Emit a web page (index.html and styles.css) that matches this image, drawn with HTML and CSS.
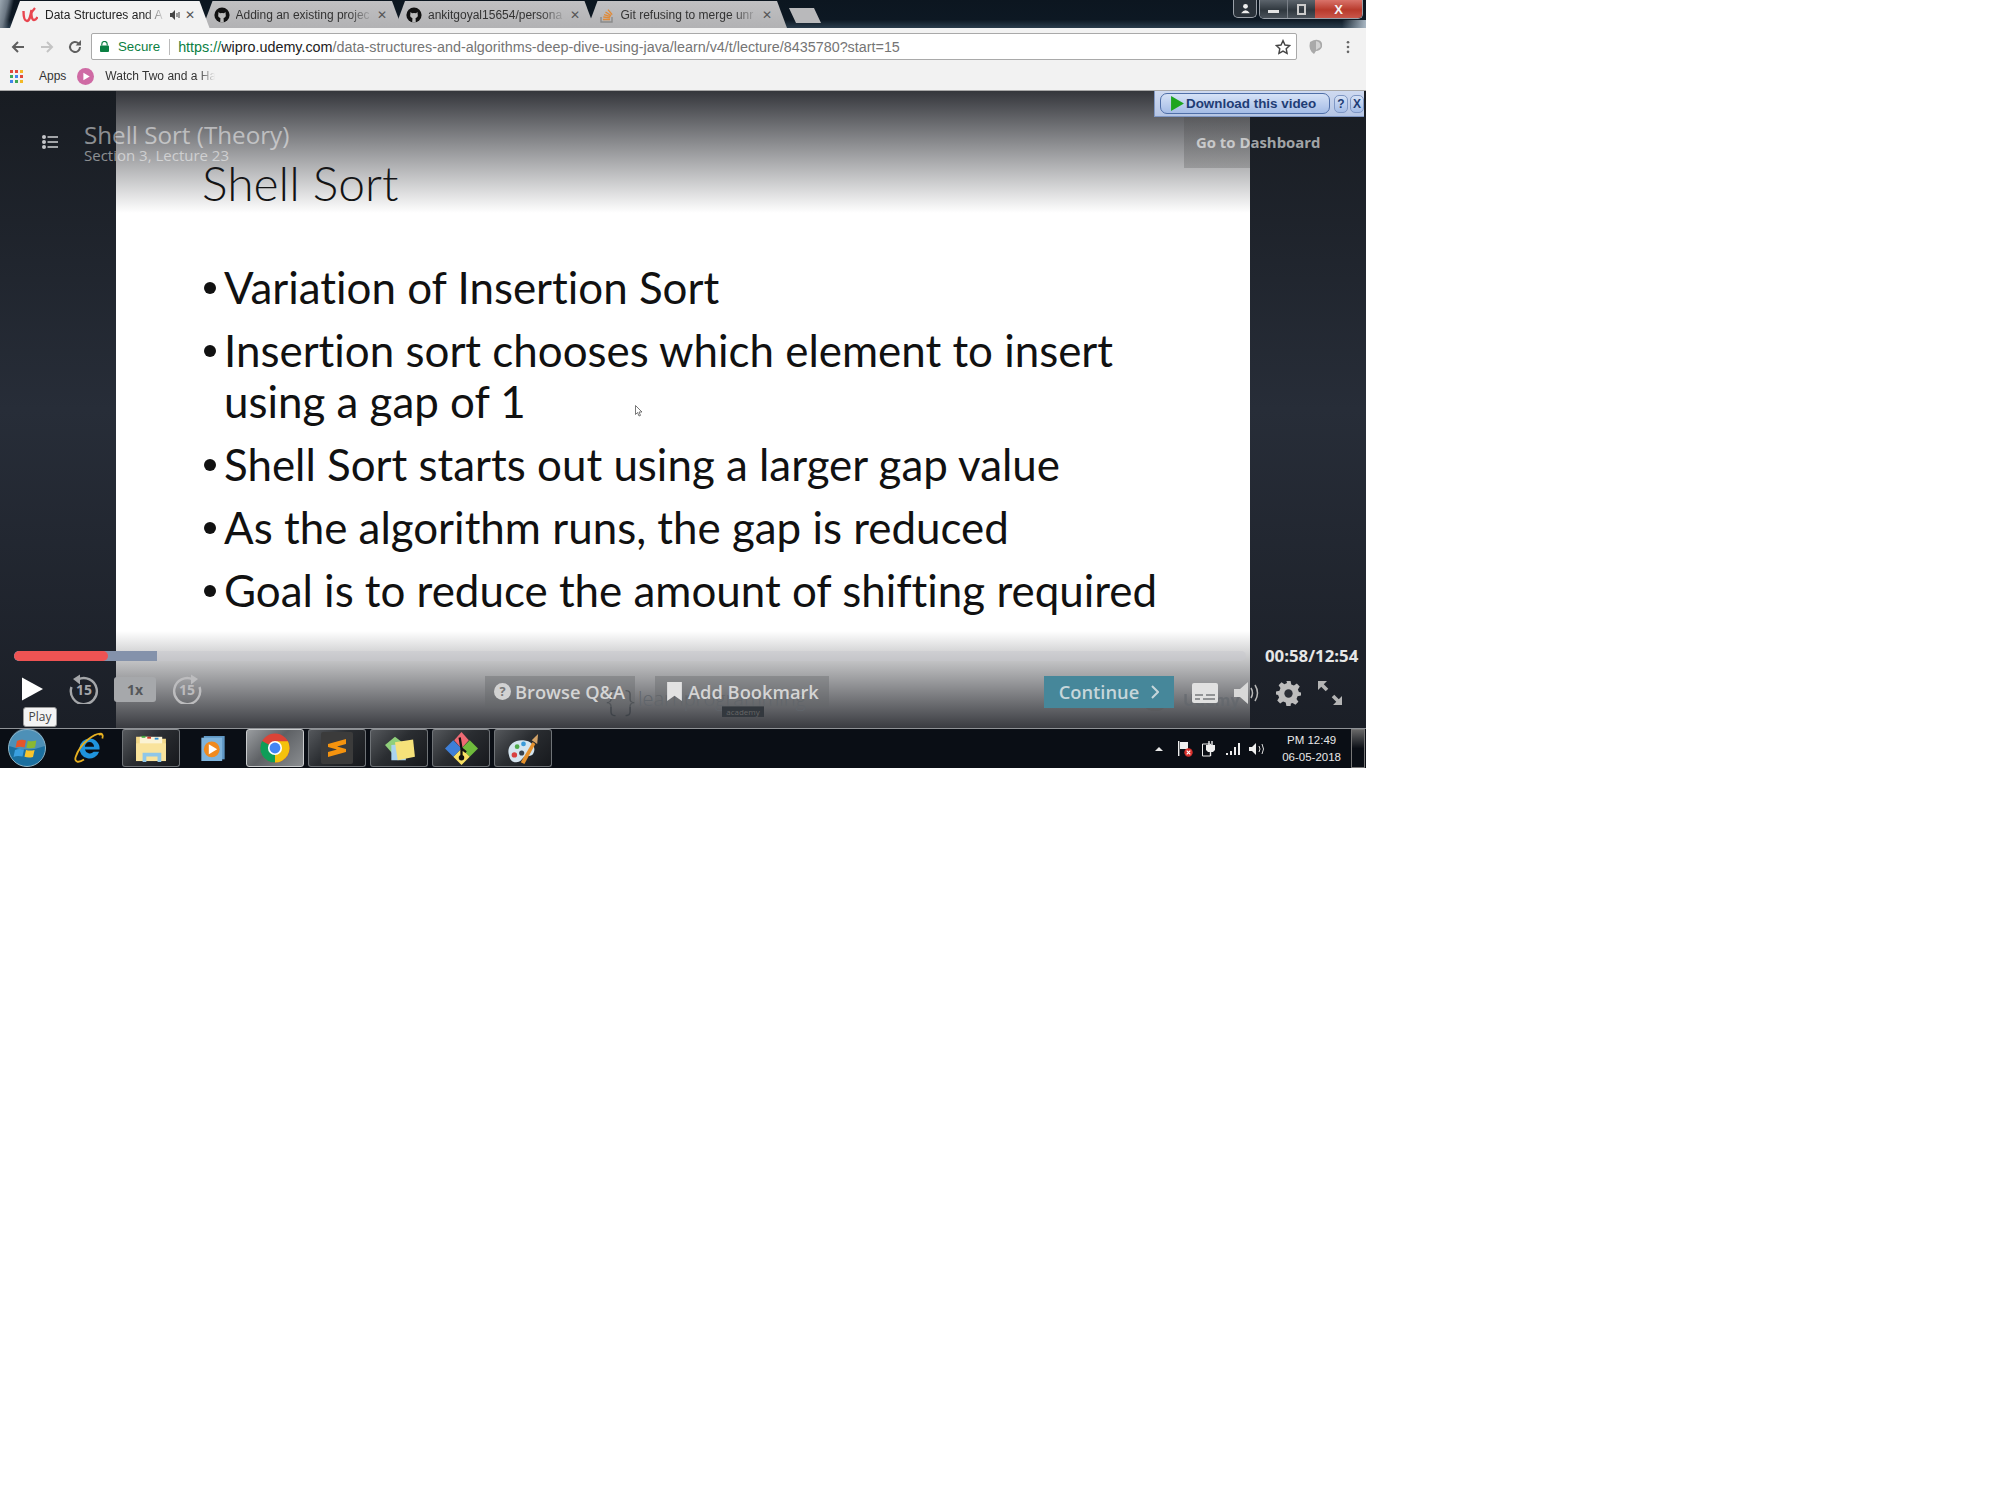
FILE: index.html
```html
<!DOCTYPE html>
<html lang="en">
<head>
  <meta charset="UTF-8">
  <title>Shell Sort (Theory)</title>
  <link rel="stylesheet" href="styles.css">
</head>
<body>
<div class="screen">

  <!-- tab strip -->
  <div class="tabstrip">
    <div class="tab tab-active">
      <svg class="favicon" viewBox="0 0 16 16"><path d="M1.500 4 C1.500 9 2.500 14 5 14 C7.500 14 8.500 9 9.500 3 C9 9 10 13 12 13 C13.500 13 14.500 12 15.500 10" fill="none" stroke="#e8454f" stroke-width="2.400"/><path d="M9 6 L13 1" stroke="#e8454f" stroke-width="2.200"/></svg>
      <span class="tab-title">Data Structures and A</span>
      <svg class="tab-sound" viewBox="0 0 10 10"><path d="M0 3h2l3-3v10l-3-3H0z" fill="#444"/><path d="M7 3v4M9 2v6" stroke="#444"/></svg>
      <span class="tab-x">✕</span>
    </div>
    <div class="tab">
      <svg class="favicon" viewBox="0 0 16 16"><circle cx="8" cy="8" r="7.600" fill="#111"/><path d="M4.500 5 L6 6.200 Q8 5.600 10 6.200 L11.500 5 L11.700 7.600 Q12.400 10.400 9.600 11 L9.800 15.600 H6.200 L6.400 11 Q3.600 10.400 4.300 7.600Z" fill="#bbb"/></svg>
      <span class="tab-title">Adding an existing projec</span>
      <span class="tab-x">✕</span>
    </div>
    <div class="tab">
      <svg class="favicon" viewBox="0 0 16 16"><circle cx="8" cy="8" r="7.600" fill="#111"/><path d="M4.500 5 L6 6.200 Q8 5.600 10 6.200 L11.500 5 L11.700 7.600 Q12.400 10.400 9.600 11 L9.800 15.600 H6.200 L6.400 11 Q3.600 10.400 4.300 7.600Z" fill="#bbb"/></svg>
      <span class="tab-title">ankitgoyal15654/persona</span>
      <span class="tab-x">✕</span>
    </div>
    <div class="tab">
      <svg class="favicon" viewBox="0 0 16 16"><path d="M2 10v5h11v-5" fill="none" stroke="#8a8a8a" stroke-width="1.400"/><path d="M4 12.500h7M4.300 10l6.800 .9M5 7.600l6.500 2M6.500 5l5.600 3.600M9 2.600l4.200 5" stroke="#e08a38" stroke-width="1.400"/></svg>
      <span class="tab-title">Git refusing to merge unr</span>
      <span class="tab-x">✕</span>
    </div>
    <div class="tab-new"></div>
    <div class="winctl">
      <span class="win-btn win-user"><svg viewBox="0 0 10 10" width="11" height="11"><circle cx="5" cy="3" r="2.200" fill="#eee"/><path d="M1 9.400 Q5 3.600 9 9.400z" fill="#eee"/></svg></span>
      <div class="win-group">
        <span class="win-btn win-min"><i></i></span>
        <span class="win-btn win-max"><i></i></span>
        <span class="win-btn win-close">X</span>
      </div>
    </div>
  </div>

  <!-- toolbar -->
  <div class="toolbar">
    <svg class="nav-icon" viewBox="0 0 16 16"><path d="M14 8H3M8 3 3 8l5 5" fill="none" stroke="#5f5f5f" stroke-width="2"/></svg>
    <svg class="nav-icon" viewBox="0 0 16 16"><path d="M2 8h11M8 3l5 5-5 5" fill="none" stroke="#c4c4c4" stroke-width="2"/></svg>
    <svg class="nav-icon nav-reload" viewBox="0 0 16 16"><path d="M13 8a5 5 0 1 1-1.500-3.600" fill="none" stroke="#5f5f5f" stroke-width="2"/><path d="M14 1v5.400H8.600z" fill="#5f5f5f"/></svg>
    <div class="omnibox">
      <svg class="lock" viewBox="0 0 10 12"><path d="M2 5V3.400a3 3 0 0 1 6 0V5" fill="none" stroke="#0b8043" stroke-width="1.300"/><rect y="5" width="10" height="7" rx="1" x="0" fill="#0b8043"/></svg>
      <span class="secure">Secure</span>
      <span class="omni-sep"></span>
      <span class="url"><span class="url-green">https://</span><span class="url-host">wipro.udemy.com</span>/data-structures-and-algorithms-deep-dive-using-java/learn/v4/t/lecture/8435780?start=15</span>
      <svg class="star" viewBox="0 0 16 16"><path d="M8 1.600l2 4.400 4.600.5-3.400 3.200.9 4.700L8 12.100l-4.100 2.300.9-4.700L1.400 6.500 6 6z" fill="none" stroke="#444" stroke-width="1.400"/></svg>
    </div>
    <svg class="ext-icon" viewBox="0 0 16 16"><path d="M3 3 Q8 0 11 1 Q16 2 15 8 Q13 12 9 12 L7 15 Q1 11 3 3z" fill="#a9a9a9"/><path d="M9 2 Q14 3 13.500 8 L9 11z" fill="#d2d2d2"/></svg>
    <svg class="menu-icon" viewBox="0 0 4 16"><circle cx="2" cy="2.500" r="1.500" fill="#666"/><circle cx="2" cy="8" r="1.500" fill="#666"/><circle cx="2" cy="13.500" r="1.500" fill="#666"/></svg>
  </div>

  <!-- bookmarks -->
  <div class="bookmarks">
    <span class="apps-grid">
      <i class="c-r"></i><i class="c-r"></i><i class="c-y"></i>
      <i class="c-g"></i><i class="c-b"></i><i class="c-r"></i>
      <i class="c-b"></i><i class="c-g"></i><i class="c-y"></i>
    </span>
    <span class="bm-label">Apps</span>
    <svg class="bm-play" viewBox="0 0 16 16"><circle cx="8" cy="8" r="8" fill="#cf6aa4"/><path d="M6 4.400 12 8l-6 3.600z" fill="#fff"/></svg>
    <span class="bm-label bm-fade">Watch Two and a Ha</span>
  </div>

  <!-- video player -->
  <div class="player">
    <div class="stage">
      <div class="slide">
        <h1 class="slide-title">Shell Sort</h1>
        <ul class="slide-list">
          <li>Variation of Insertion Sort</li>
          <li>Insertion sort chooses which element to insert using a gap of 1</li>
          <li>Shell Sort starts out using a larger gap value</li>
          <li>As the algorithm runs, the gap is reduced</li>
          <li>Goal is to reduce the amount of shifting required</li>
        </ul>
      </div>
    </div>

    <svg class="cursor" viewBox="0 0 8 12"><path d="M.5.5v9l2-2 1.500 3.500 1.500-.6L4 7h3z" fill="#fff" stroke="#555" stroke-width=".8"/></svg>

    <div class="shade-top"></div>
    <div class="shade-bottom"></div>

    <!-- watermark sitting under the controls -->
    <div class="wm wm-brace">{ }</div>
    <div class="wm wm-lpa">learnprogramming</div>
    <div class="wm wm-academy">academy</div>
    <svg class="wm wm-u" viewBox="0 0 30 22"><path d="M2 2v10a10 8 0 0 0 20 0V2" fill="none" stroke="#555" stroke-width="5"/></svg>
    <div class="wm wm-udemy">Udemy</div>

    <div class="player-top">
      <svg class="curriculum" viewBox="0 0 16 14"><g fill="#c4c6c9"><circle cx="2" cy="2" r="2"/><circle cx="2" cy="7" r="2"/><circle cx="2" cy="12" r="2"/><rect x="5.500" y="1.200" width="10.500" height="1.600"/><rect x="5.500" y="6.200" width="10.500" height="1.600"/><rect x="5.500" y="11.200" width="10.500" height="1.600"/></g></svg>
      <div class="lecture-info">
        <div class="lecture-name">Shell Sort (Theory)</div>
        <div class="lecture-sec">Section 3, Lecture 23</div>
      </div>
      <a class="dash-btn">Go to Dashboard</a>
    </div>

    <div class="dl-bar">
      <span class="dl-btn"><svg viewBox="0 0 12 14" width="13" height="15"><path d="M0 0 12 7 0 14z" fill="#1ea51e"/></svg>Download this video</span>
      <span class="dl-small">?</span>
      <span class="dl-small">X</span>
    </div>

    <div class="player-bottom">
      <div class="progress-row">
        <div class="progress">
          <div class="progress-buf" style="width: 11.600%"></div>
          <div class="progress-done" style="width: 7.600%"></div>
        </div>
        <span class="time">00:58/12:54</span>
      </div>
      <div class="controls">
        <div class="ctl-left">
          <svg class="play" viewBox="0 0 22 24"><path d="M0 0 22 12 0 24z" fill="#fff"/></svg>
          <span class="skip skip-back">
            <svg viewBox="0 0 30 30"><path d="M9 5.500A13 13 0 1 1 2.500 13" fill="none" stroke="#a4a6a9" stroke-width="2.400"/><path d="M11 .5v10L4 5z" fill="#a4a6a9"/></svg>
            <b>15</b>
          </span>
          <span class="rate">1x</span>
          <span class="skip skip-fwd">
            <svg viewBox="0 0 30 30"><path d="M21 5.500A13 13 0 1 0 27.500 13" fill="none" stroke="#bcbcbe" stroke-width="2.400"/><path d="M19 .5v10L26 5z" fill="#bcbcbe"/></svg>
            <b>15</b>
          </span>
        </div>
        <div class="ctl-mid">
          <span class="ghost-btn ghost-qa">
            <svg viewBox="0 0 16 16" width="17" height="17"><circle cx="8" cy="8" r="8" fill="#d2d2d2"/><text x="8" y="12.500" font-size="12" font-weight="700" text-anchor="middle" fill="#777" font-family="Open Sans">?</text></svg>
            Browse Q&amp;A
          </span>
          <span class="ghost-btn ghost-bm">
            <svg viewBox="0 0 14 18" width="15" height="19"><path d="M0 0h14v18l-7-5-7 5z" fill="#e2e2e2"/></svg>
            Add Bookmark
          </span>
        </div>
        <span class="continue">Continue
          <svg viewBox="0 0 8 14" width="8" height="14"><path d="M1 1l6 6-6 6" fill="none" stroke="#c6d6da" stroke-width="2"/></svg>
        </span>
        <div class="ctl-right">
          <svg viewBox="0 0 26 20" width="26" height="20"><rect width="26" height="20" rx="2" fill="#e1e1e1"/><path d="M3 12h8M14 12h9M3 16h5M11 16h12" stroke="#77797c" stroke-width="1.600"/></svg>
          <svg viewBox="0 0 26 22" width="26" height="22"><path d="M0 7h6l8-7v22l-8-7H0z" fill="#d8d8d8"/><path d="M17 6q3 5 0 10M21 3q5 8 0 16" fill="none" stroke="#b8b8b8" stroke-width="1.500"/></svg>
          <svg viewBox="0 0 24 24" width="25" height="25"><path d="M10 0h4l.7 3.300 2.500 1 2.800-1.800 2.800 2.800-1.800 2.800 1 2.500L24 11v3l-3.300.7-1 2.500 1.800 2.800-2.800 2.800-2.800-1.800-1.600.7L14 24h-4l-.7-3.300-2.500-1-2.800 1.800-2.800-2.800 1.800-2.800-1-2.500L0 13v-3l3.300-.7 1-2.500-1.800-2.800 2.800-2.800 2.800 1.800 2.500-1z" fill="#bdbdbd"/><circle cx="12" cy="12" r="4" fill="#2a2e36"/></svg>
          <svg viewBox="0 0 26 26" width="26" height="26"><path d="M1 1h9L1 10zM25 25h-9l9-9z" fill="#b4b4b4"/><path d="M4 4l6 6M22 22l-6-6" stroke="#b4b4b4" stroke-width="3.600"/></svg>
        </div>
      </div>
      <span class="tooltip">Play</span>
    </div>
  </div>

  <!-- taskbar -->
  <div class="taskbar">
    <span class="start">
      <svg viewBox="0 0 38 38" width="38" height="38">
        <circle cx="19" cy="19" r="18.500" fill="#1b6f9f" stroke="#8fb4c4" stroke-width="1"/>
        <path d="M1 17 A18 18 0 0 1 37 17 Q19 24 1 17z" fill="#7fb2cf" opacity=".5"/>
        <path d="M9 12q4-2 9-.6l-1.500 7q-5-1.400-9 .4z" fill="#e5552a"/>
        <path d="M19.800 11.800q4 1.200 8.500-.2L27 18.600q-4 1.400-8.600.2z" fill="#8ab833"/>
        <path d="M7 21q4-1.800 9-.4L14.500 27.600q-5-1.400-9 .4z" fill="#3a9fe0"/>
        <path d="M18 21q4 1.200 8.600 0L25 28q-4.500 1.200-8.500-.2z" fill="#f8c52c"/>
      </svg>
    </span>
    <span class="task-item">
      <svg viewBox="0 0 36 36" width="33" height="33">
        <path d="M18 7a11 11 0 1 0 10.500 14.500h-6A5.500 5.500 0 0 1 13 19h16A11 11 0 0 0 18 7zm-5 9a5 5 0 0 1 10 0z" fill="#1f93dc"/>
        <path d="M32 2C24 0 8 12 3 27c-2 6 3 7 9 3" fill="none" stroke="#e7b020" stroke-width="2"/>
        <path d="M28 3q6-2 4 4" fill="none" stroke="#e7b020" stroke-width="2"/>
      </svg>
    </span>
    <span class="task-item task-btn">
      <svg viewBox="0 0 34 30" width="32" height="28">
        <path d="M1 3h13l2 2h17v24H1z" fill="#f3d888"/>
        <rect x="5" y="3" width="24" height="8" fill="#fbf3d4"/>
        <rect x="7" y="2" width="4" height="2" fill="#3aa63a"/><rect x="13" y="3" width="4" height="2" fill="#cf3a30"/><rect x="21" y="4" width="4" height="2" fill="#2f8fd0"/>
        <path d="M1 10h32v19H1z" fill="#f9e39c"/>
        <path d="M8 20h20v10h-4v-6H12v6H8z" fill="#8fc7e8"/>
      </svg>
    </span>
    <span class="task-item">
      <svg viewBox="0 0 30 30" width="26" height="25">
        <rect x="4" y="0" width="25" height="28" fill="#5f97c4"/>
        <rect x="1" y="2" width="25" height="28" fill="#7fb4dc"/>
        <circle cx="13.500" cy="16" r="9.500" fill="#f08a1e"/>
        <path d="M10 10l10 6-10 6z" fill="#fff"/>
      </svg>
    </span>
    <span class="task-item task-btn task-on">
      <svg viewBox="0 0 36 36" width="30" height="30">
        <circle cx="18" cy="18" r="17.500" fill="#db4437"/>
        <path d="M18 18 L2.500 9.500 A17.500 17.500 0 0 0 18 35.500 z" fill="#0f9d58"/>
        <path d="M18 18 L18 35.500 A17.500 17.500 0 0 0 33.500 10 L18 10z" fill="#f4c20d"/>
        <circle cx="18" cy="18" r="8.500" fill="#fff"/>
        <circle cx="18" cy="18" r="6.500" fill="#4285f4"/>
      </svg>
    </span>
    <span class="task-item task-btn">
      <span class="sublime"><svg viewBox="0 0 18 20" width="18" height="20"><path d="M0 6 18 1v5L9 8.500 18 11v3L0 19v-5l9-2.500L0 9z" fill="#f5930e"/></svg></span>
    </span>
    <span class="task-item task-btn">
      <svg viewBox="0 0 34 32" width="33" height="29">
        <path d="M1 12 12 3l12 9-11 14z" fill="#8fcf7a"/>
        <path d="M8 12l16-1v18H8z" fill="#aad4ee"/>
        <path d="M12 9 32 6l2 19-19 4z" fill="#f6e27a"/>
      </svg>
    </span>
    <span class="task-item task-btn">
      <svg viewBox="0 0 36 36" width="33" height="33">
        <path d="M18 0 26 9 18 18 10 9z" fill="#ee6a74"/>
        <path d="M27 9 36 18 27 27 18 18z" fill="#6fbb3c"/>
        <path d="M18 18 27 27 18 36 9 27z" fill="#f8e064"/>
        <path d="M9 9 18 18 9 27 0 18z" fill="#3e7fd8"/>
        <path d="M16 6l2 12v9M18 18l5 4" stroke="#111" stroke-width="2.500" fill="none"/>
        <circle cx="18" cy="28" r="3" fill="#111"/>
      </svg>
    </span>
    <span class="task-item task-btn">
      <svg viewBox="0 0 36 34" width="33" height="31">
        <path d="M2 24C-1 14 8 7 18 8c10 1 14 8 11 14-2 5-8 2-11 5s-3 5-8 5-7-3-8-8z" fill="#d4e4ee"/>
        <circle cx="8" cy="24" r="3" fill="#d94040"/>
        <circle cx="11" cy="15" r="2.600" fill="#4eaa4a"/>
        <circle cx="18" cy="12" r="2.600" fill="#3a9ad9"/>
        <circle cx="16" cy="22" r="2.800" fill="#38424c"/>
        <path d="M15 32 28 10l3 2-12 22z" fill="#e5912c"/>
        <path d="M27 8 34 1l-1 11z" fill="#d3a368"/>
      </svg>
    </span>

    <div class="tray">
      <svg class="tray-up" viewBox="0 0 8 4"><path d="M0 4 4 0l4 4z" fill="#e8e8e8"/></svg>
      <svg class="tray-ic" viewBox="0 0 16 16" width="16" height="16"><rect x="1" y="0" width="1.400" height="15" fill="#eee"/><path d="M3 1h8v7H3z" fill="#eee"/><circle cx="11.500" cy="11.500" r="4.200" fill="#d9302c"/><path d="M9.700 9.700l3.600 3.600m0-3.600-3.600 3.600" stroke="#fff" stroke-width="1.200"/></svg>
      <svg class="tray-ic" viewBox="0 0 16 16" width="16" height="16"><path d="M1.500 3h8v12h-8z" fill="none" stroke="#eee"/><path d="M5 4h9v5l-2 2H7L5 9z" fill="#eee"/><path d="M8 0v4M11 0v4M9.500 11v4" stroke="#eee" stroke-width="1.400"/></svg>
      <svg class="tray-ic" viewBox="0 0 16 14" width="16" height="14"><path d="M1 11h2v2H1zM5 9h2v4H5zM9 5h2v8H9zM13 1h2v12h-2z" fill="#eee"/></svg>
      <svg class="tray-ic" viewBox="0 0 16 14" width="16" height="14"><path d="M0 5h3l4-4v12L3 9H0z" fill="#eee"/><path d="M10 4q2 3 0 6M13 2q3 5 0 10" fill="none" stroke="#ddd"/></svg>
      <div class="clock"><span>PM 12:49</span><span>06-05-2018</span></div>
      <span class="show-desktop"></span>
    </div>
  </div>

</div>
</body>
</html>
```

FILE: styles.css
```css
* {
  box-sizing: border-box;
}

body {
  margin: 0;
  background-color: #fff;
  font-family: "Open Sans", sans-serif;
}

.screen {
  width: 1366px;
  height: 768px;
  overflow: hidden;
}

/* tab strip */
.tabstrip {
  height: 28px;
  display: flex;
  align-items: flex-end;
  background:
    linear-gradient(103deg, #9aa6b0 0, #6c7884 8px, transparent 14px),
    linear-gradient(to left, #aab8c4 0, transparent 24px) bottom / 100% 8px no-repeat,
    linear-gradient(#0c1620 0, #0d1823 70%, #2a3c4c 100%);
  padding-left: 10px;
}

.tab {
  width: 199.5px;
  height: 27px;
  margin-right: -7px;
  padding: 0 15px 0 11px;
  display: flex;
  align-items: center;
  background: linear-gradient(#c0c0c2, #b2b2b4);
  clip-path: polygon(10px 0, calc(100% - 10px) 0, 100% 100%, 0 100%);
  font-family: "Liberation Sans", sans-serif;
  font-size: 12px;
  color: #333;
}

.tab-active {
  background: #f2f2f2;
  color: #222;
  padding-left: 12px;
  position: relative;
  z-index: 1;
}

.favicon {
  width: 16px;
  height: 16px;
  flex-shrink: 0;
  margin-right: 6px;
}

.tab-active .favicon {
  margin-right: 7px;
}

.tab-title {
  flex: 1;
  white-space: nowrap;
  overflow: hidden;
  -webkit-mask-image: linear-gradient(to right, #000 82%, transparent);
  mask-image: linear-gradient(to right, #000 82%, transparent);
}

.tab-sound {
  width: 10px;
  height: 10px;
  margin: 0 1px 0 4px;
}

.tab-x {
  width: 10px;
  margin-left: 4px;
  font-size: 12px;
  color: #555;
  text-align: center;
}

.tab-new {
  width: 32px;
  height: 15px;
  margin: 0 0 5px 9px;
  background-color: #b9b9bb;
  clip-path: polygon(0 0, 25px 0, 100% 100%, 7px 100%);
}

.winctl {
  margin-left: auto;
  margin-right: 3px;
  align-self: flex-start;
  display: flex;
  gap: 2px;
}

.win-group {
  display: flex;
  border: 1px solid #9aa0a8;
  border-top: 0;
  border-radius: 0 0 5px 5px;
  overflow: hidden;
}

.win-btn {
  height: 18px;
  display: flex;
  align-items: center;
  justify-content: center;
}

.win-user {
  width: 24px;
  background-color: #2a323a;
  border: 1px solid #9aa0a8;
  border-top: 0;
  border-radius: 0 0 5px 5px;
}

.win-min, .win-max {
  background: linear-gradient(#5c646c, #30383f 55%, #4a525a);
}

.win-min {
  width: 28px;
  border-right: 1px solid #7a8088;
}

.win-max {
  width: 27px;
}

.win-min i {
  width: 11px;
  height: 3px;
  background-color: #e4e4e4;
  margin-top: 5px;
}

.win-max i {
  width: 9px;
  height: 11px;
  border: 2px solid #ccc;
}

.win-close {
  width: 47px;
  background: linear-gradient(#d9736a, #b83a2c 55%, #c9564a);
  color: #f4f4f4;
  font-family: "Liberation Sans", sans-serif;
  font-size: 13px;
  font-weight: 700;
}

/* toolbar */
.toolbar {
  height: 34px;
  display: flex;
  align-items: center;
  background-color: #f2f2f2;
  padding: 3px 0 0 10px;
}

.nav-icon {
  width: 16px;
  height: 16px;
  margin-right: 13px;
}

.nav-reload {
  margin-left: -1px;
  margin-right: 14px;
}

.omnibox {
  width: 1206px;
  height: 27px;
  margin-left: -6px;
  padding: 0 5px 0 8px;
  display: flex;
  align-items: center;
  background-color: #fff;
  border: 1px solid #a9a9a9;
  border-radius: 2px;
  font-family: "Liberation Sans", sans-serif;
  font-size: 13.3px;
  color: #757575;
}

.lock {
  width: 9px;
  height: 11px;
  margin-right: 9px;
}

.secure {
  color: #0b8043;
}

.omni-sep {
  width: 1px;
  height: 16px;
  background-color: #bbb;
  margin: 0 8px 0 9px;
}

.url {
  flex: 1;
  white-space: nowrap;
  font-size: 14.35px;
}

.url-green {
  color: #0b8043;
}

.url-host {
  color: #222;
}

.star {
  width: 16px;
  height: 16px;
}

.ext-icon {
  width: 16px;
  height: 16px;
  margin-left: 10px;
}

.menu-icon {
  width: 4px;
  height: 14px;
  margin-left: 23px;
}

/* bookmarks */
.bookmarks {
  height: 29px;
  display: flex;
  align-items: center;
  background-color: #f2f2f2;
  border-bottom: 1px solid #a8a8a8;
  padding-left: 10px;
  font-family: "Liberation Sans", sans-serif;
  font-size: 12px;
  color: #333;
}

.apps-grid {
  width: 13px;
  height: 13px;
  display: grid;
  grid-template-columns: repeat(3, 3px);
  gap: 2px;
  margin-right: 16px;
}

.apps-grid i {
  display: block;
}

.c-r { background-color: #e0483b; }
.c-y { background-color: #f3b824; }
.c-g { background-color: #3da657; }
.c-b { background-color: #3f83ec; }

.bm-play {
  width: 17px;
  height: 17px;
  margin: 0 11px;
}

.bm-label {
  white-space: nowrap;
}

.bm-fade {
  width: 110px;
  overflow: hidden;
  -webkit-mask-image: linear-gradient(to right, #000 85%, transparent);
  mask-image: linear-gradient(to right, #000 85%, transparent);
}

/* player */
.player {
  position: relative;
  height: 637px;
  background: linear-gradient(#181c22, #272d38 50%, #1b1f27);
  overflow: hidden;
}

.stage {
  margin: 0 116px;
  height: 100%;
  background-color: #fff;
}

.slide {
  padding: 68px 60px 0 87px;
  color: #111;
  font-family: Lato, sans-serif;
  font-variant-ligatures: none;
}

.slide-title {
  margin: 0 0 55px;
  margin-left: -1px;
  font-size: 48px;
  line-height: 48px;
  font-weight: 300;
}

.slide-list {
  margin: 0;
  padding: 0;
  list-style: none;
  font-size: 43.9px;
  line-height: 51px;
}

.slide-list li {
  position: relative;
  padding-left: 21px;
  margin-bottom: 12px;
}

.slide-list li::before {
  content: "";
  position: absolute;
  left: 1px;
  top: 20px;
  width: 12px;
  height: 12px;
  border-radius: 50%;
  background-color: #111;
}

.cursor {
  position: absolute;
  left: 635px;
  top: 314px;
  width: 8px;
  height: 12px;
}

.shade-top {
  position: absolute;
  left: 116px;
  right: 116px;
  top: 0;
  height: 122px;
  background: linear-gradient(rgba(30,32,38,.9), rgba(30,32,38,0));
}

.shade-bottom {
  position: absolute;
  left: 116px;
  right: 116px;
  bottom: 0;
  height: 97px;
  background: linear-gradient(rgba(30,32,38,0), rgba(30,32,38,.88));
}

.wm {
  position: absolute;
  color: #60656b;
}

.wm-brace {
  left: 606px;
  top: 588px;
  font-size: 30px;
  font-weight: 300;
  color: #3a3f45;
  opacity: .8;
  white-space: nowrap;
}

.wm-lpa {
  left: 638px;
  top: 594px;
  font-size: 20px;
  font-weight: 300;
  white-space: nowrap;
}

.wm-academy {
  left: 722px;
  top: 615px;
  width: 42px;
  height: 11px;
  background-color: #33383e;
  color: #666;
  font-size: 8px;
  line-height: 11px;
  text-align: center;
}

.wm-u {
  left: 1143px;
  top: 598px;
  width: 30px;
  height: 22px;
  opacity: .3;
}

.wm-udemy {
  left: 1183px;
  top: 598px;
  font-size: 16px;
  font-weight: 700;
  opacity: .6;
}

.player-top {
  position: absolute;
  top: 0;
  left: 0;
  right: 0;
  display: flex;
  align-items: flex-start;
  color: rgba(255,255,255,.5);
}

.curriculum {
  width: 16px;
  height: 14px;
  margin: 44px 26px 0 42px;
}

.lecture-info {
  margin-top: 30px;
}

.lecture-name {
  font-size: 24.2px;
  line-height: 27px;
}

.lecture-sec {
  font-size: 15px;
  line-height: 15px;
}

.dash-btn {
  margin: 0 32px 0 auto;
  padding: 40px 0 0 12px;
  width: 150px;
  height: 77px;
  line-height: 22px;
  background: linear-gradient(to right, rgba(70,70,70,.25) 66px, transparent 66px);
  font-size: 14.9px;
  font-weight: 700;
  color: rgba(255,255,255,.6);
  white-space: nowrap;
}

.dl-bar {
  position: absolute;
  top: 0;
  right: 2px;
  width: 210px;
  height: 26px;
  display: flex;
  align-items: center;
  gap: 2px;
  padding: 0 0 0 5px;
  background: linear-gradient(#cfdaf0, #b5c5e4);
  border-left: 1px solid #7f97c4;
  border-bottom: 1px solid #7f97c4;
}

.dl-btn {
  width: 170px;
  margin-right: 2px;
  height: 21px;
  display: flex;
  align-items: center;
  gap: 2px;
  padding-left: 10px;
  border: 1px solid #4f6fa8;
  border-radius: 7px;
  background: linear-gradient(#d6e2f6, #a4bce6);
  font-family: "Liberation Sans", sans-serif;
  font-size: 13.4px;
  font-weight: 700;
  color: #1f3d75;
  white-space: nowrap;
}

.dl-small {
  width: 14px;
  height: 18px;
  border-radius: 5px;
  border: 1px solid #7f97c4;
  background: linear-gradient(#d6e2f6, #a4bce6);
  font-family: "Liberation Sans", sans-serif;
  font-size: 12px;
  font-weight: 700;
  color: #1f3d75;
  text-align: center;
  line-height: 16px;
}

.player-bottom {
  position: absolute;
  left: 0;
  right: 0;
  bottom: 0;
  height: 77px;
  padding: 0 6px 0 14px;
}

.progress-row {
  display: flex;
  align-items: center;
  height: 10px;
}

.progress {
  position: relative;
  flex-shrink: 0;
  width: 1232px;
  height: 10px;
  background-color: rgba(200,200,205,.5);
  border-radius: 5px;
  overflow: hidden;
}

.progress-buf, .progress-done {
  position: absolute;
  left: 0;
  top: 0;
  height: 100%;
}

.progress-buf {
  background-color: #8492ab;
}

.progress-done {
  background-color: #ee5353;
  border-radius: 5px;
}

.time {
  margin-left: 19px;
  margin-top: -1px;
  font-size: 16.8px;
  font-weight: 700;
  color: #e6e6e6;
  white-space: nowrap;
}

.controls {
  display: flex;
  align-items: center;
  height: 56px;
  margin-top: 1px;
}

.ctl-left {
  display: flex;
  align-items: center;
  width: 471px;
  margin-top: -2px;
}

.play {
  width: 21px;
  height: 24px;
  margin-left: 8px;
}

.skip {
  position: relative;
  width: 30px;
  height: 30px;
  display: inline-block;
}

.skip-back {
  margin-left: 26px;
  color: #a4a6a9;
}

.skip-fwd {
  margin-left: 16px;
  color: #bcbcbe;
}

.skip svg {
  width: 30px;
  height: 30px;
}

.skip b {
  position: absolute;
  left: 0;
  right: 0;
  top: 6px;
  text-align: center;
  font-size: 14px;
}

.rate {
  width: 42px;
  height: 25px;
  margin-left: 15px;
  background-color: #a6a8ab;
  border-radius: 3px;
  color: #55575a;
  font-size: 14px;
  font-weight: 700;
  text-align: center;
  line-height: 25px;
}

.ctl-mid {
  display: flex;
  gap: 20px;
  margin-top: 3px;
}

.ghost-btn {
  height: 31px;
  display: flex;
  align-items: center;
  background-color: rgba(100,102,106,.4);
  font-size: 18.3px;
  font-weight: 600;
  color: #d4d4d4;
  white-space: nowrap;
}

.ghost-qa {
  width: 150px;
  padding-left: 9px;
  gap: 4px;
}

.ghost-bm {
  width: 174px;
  padding-left: 12px;
  gap: 6px;
}

.continue {
  margin-top: 3px;
  margin-left: 215px;
  width: 130px;
  height: 32px;
  display: flex;
  align-items: center;
  justify-content: center;
  gap: 12px;
  background-color: #46879a;
  font-size: 18.3px;
  font-weight: 600;
  color: #c6d6da;
}

.ctl-right {
  display: flex;
  align-items: center;
  gap: 16px;
  margin: 6px 0 0 18px;
}

.tooltip {
  position: absolute;
  left: 23px;
  bottom: 1px;
  width: 34px;
  height: 20px;
  background-color: #f4f4f4;
  border: 1px solid #999;
  border-radius: 3px;
  font-size: 12px;
  color: #444;
  text-align: center;
  line-height: 18px;
}

/* taskbar */
.taskbar {
  height: 40px;
  display: flex;
  align-items: flex-start;
  background-color: #0a0e15;
  border-top: 1px solid #8f9296;
  padding-left: 8px;
}

.start {
  width: 38px;
  margin-right: 14px;
  display: flex;
}

.task-item {
  width: 58px;
  height: 38px;
  margin-right: 4px;
  display: flex;
  align-items: center;
  justify-content: center;
}

.task-btn {
  border: 1px solid #6f7377;
  border-top-color: #8a8d91;
  border-radius: 3px;
  background: linear-gradient(135deg, #55585c, #2a2d31 45%, #17191d);
}

.task-on {
  background: linear-gradient(135deg, #9a9da0, #5e6165 45%, #8a8d90);
  border-color: #c9cbcd;
}

.sublime {
  width: 32px;
  height: 32px;
  background-color: #3b3b3b;
  border-radius: 2px;
  display: flex;
  align-items: center;
  justify-content: center;
}

.tray {
  margin-left: auto;
  padding-right: 1px;
  display: flex;
  align-items: center;
  height: 39px;
}

.tray-up {
  width: 8px;
  height: 4px;
  margin-right: 14px;
}

.tray-ic {
  margin-right: 8px;
}

.clock {
  display: flex;
  flex-direction: column;
  align-items: center;
  margin: 0 10px 0 9px;
  font-family: "Liberation Sans", sans-serif;
  font-size: 11.5px;
  line-height: 17px;
  color: #e8e8e8;
}

.show-desktop {
  width: 14px;
  height: 100%;
  border: 1px solid #777;
  background: linear-gradient(#666, #0a0e15 50%);
}
```
